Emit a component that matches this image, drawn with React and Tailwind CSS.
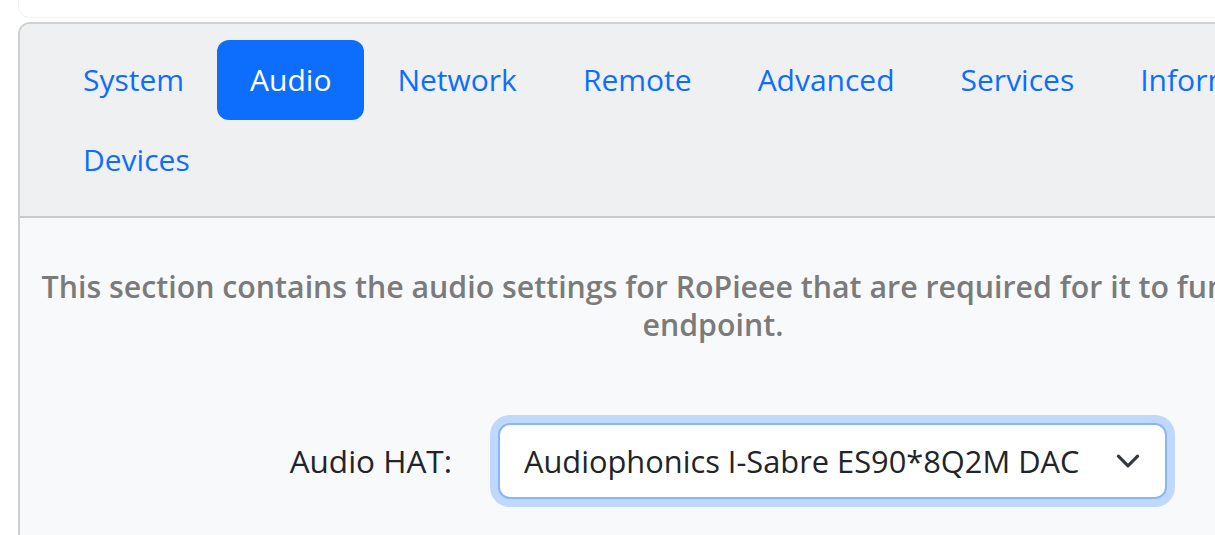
import React from "react";

const tabs = ["System", "Audio", "Network", "Remote", "Advanced", "Services", "Information", "Devices"];

export default function App() {
  return (
    <div className="w-[1215px] h-[535px] overflow-hidden bg-white font-['Open_Sans','Noto_Sans',sans-serif]">
      <div className="ml-[18px] w-[1400px] h-[18px] border border-t-0 border-[#f1f1f1] rounded-b-[12px]" />
      <div className="mt-[4px] ml-[18px] w-[1390px] border-2 border-[#cfd0d2] rounded-[12px] overflow-hidden">
        <div className="bg-[#eff0f2] border-b-2 border-[#c9cacc] pl-[30px] pr-[32px] py-[16px]">
          <div className="flex flex-wrap">
            {tabs.map((t) => (
              <div
                key={t}
                className={
                  t === "Audio"
                    ? "px-[33px] py-[16px] text-[30px] leading-[48px] rounded-[12px] bg-[#0d6efd] text-white"
                    : "px-[33px] py-[16px] text-[30px] leading-[48px] rounded-[12px] text-[#0d6efd]"
                }
              >
                {t}
              </div>
            ))}
          </div>
        </div>
        <div className="bg-[#f8f9fa] px-[32px] pt-[50px] pb-[40px]">
          <div className="-mx-[24px] text-center text-[30.3px] leading-[38px] font-semibold text-[#7b7b7b]">
            This section contains the audio settings for RoPieee that are required for it to function as an
            <br />
            endpoint.
          </div>
          <div className="mt-[71px] flex items-center">
            <div className="w-[400px] text-right text-[31.5px] text-[#212529]">Audio HAT:</div>
            <div className="ml-[38px] w-[685px] rounded-[20px] bg-[#bfd8fc] p-[8px]">
              <div className="h-[76px] rounded-[12px] border-2 border-[#86b7fe] bg-white pl-[24px] pr-[24px] flex items-center justify-between">
                <span className="text-[30.8px] text-[#212529]">Audiophonics I-Sabre ES90*8Q2M DAC</span>
                <svg width="26" height="16" viewBox="0 0 16 10" fill="none">
                  <path d="M2 2l6 6 6-6" stroke="#343a40" strokeWidth="2" strokeLinecap="round" strokeLinejoin="round" />
                </svg>
              </div>
            </div>
          </div>
        </div>
      </div>
    </div>
  );
}
